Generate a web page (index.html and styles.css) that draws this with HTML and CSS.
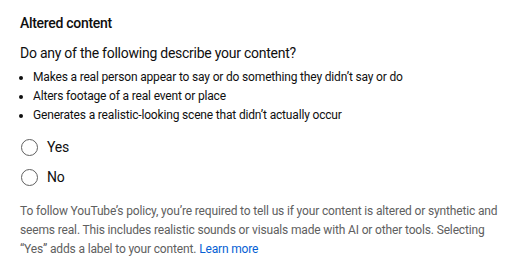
FILE: index.html
```html
<!DOCTYPE html>
<html>
<head>
<meta charset="utf-8">
<link rel="stylesheet" href="styles.css">
</head>
<body>
<div class="panel">
  <h2 class="title">Altered content</h2>
  <p class="question">Do any of the following describe your content?</p>
  <ul class="list">
    <li>Makes a real person appear to say or do something they didn’t say or do</li>
    <li>Alters footage of a real event or place</li>
    <li>Generates a realistic-looking scene that didn’t actually occur</li>
  </ul>
  <div class="radios">
    <label class="radio"><span class="circle"></span><span class="label">Yes</span></label>
    <label class="radio"><span class="circle"></span><span class="label">No</span></label>
  </div>
  <p class="note">To follow YouTube’s policy, you’re required to tell us if your content is altered or synthetic and seems real. This includes realistic sounds or visuals made with AI or other tools. Selecting “Yes” adds a label to your content. <a class="link" href="#">Learn more</a></p>
</div>
</body>
</html>
```
FILE: styles.css
```css
html, body {
  margin: 0;
  padding: 0;
  background: #fff;
}
body {
  font-family: Roboto, "Noto Sans", Arial, sans-serif;
  color: #0f0f0f;
}
.panel {
  padding: 14px 20px 0 20px;
  width: 485px;
}
.title {
  margin: 0;
  font-size: 14px;
  font-weight: 500;
  line-height: 18px;
  letter-spacing: -0.3px;
}
.question {
  margin: 11px 0 0 0;
  font-size: 14px;
  line-height: 20px;
  letter-spacing: -0.25px;
}
.list {
  margin: 5px 0 0 0;
  padding: 0 0 0 13px;
  font-size: 12px;
  line-height: 19px;
  letter-spacing: -0.17px;
}
.list li {
  margin: 0;
}
.radios {
  display: flex;
  flex-direction: column;
  gap: 10px;
  margin-top: 12px;
}
.radio {
  display: flex;
  align-items: center;
  height: 20px;
}
.circle {
  box-sizing: border-box;
  width: 17px;
  height: 17px;
  border: 1.5px solid #606060;
  border-radius: 50%;
  margin-left: 1px;
  margin-right: 9px;
}
.label {
  font-size: 14px;
  letter-spacing: -0.2px;
}
.note {
  margin: 15px 0 0 0;
  font-size: 12px;
  line-height: 19px;
  color: #606060;
  letter-spacing: -0.15px;
}
.link {
  color: #065fd4;
  text-decoration: none;
}
```
